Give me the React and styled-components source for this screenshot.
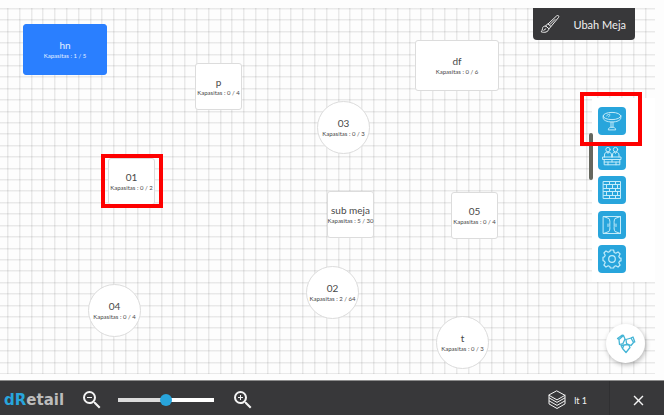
import React from "react";
import styled, { createGlobalStyle, css } from "styled-components";
import { MdZoomIn, MdZoomOut, MdClose } from "react-icons/md";

const GlobalStyle = createGlobalStyle`
  * { box-sizing: border-box; }
  body { margin: 0; background: #fdfdfd; font-family: Lato, "Open Sans", sans-serif; }
  button { font: inherit; border: 0; padding: 0; cursor: pointer; }
`;

const Page = styled.div`
  min-height: 100vh;
  display: grid;
  grid-template-rows: 1fr auto;
`;

const Room = styled.main`
  position: relative;
  padding: 8px 9px 6px 0;
  overflow: hidden;
`;

const Floor = styled.div`
  height: 100%;
  background:
    repeating-linear-gradient(to right, transparent 0 7px, rgba(0, 0, 0, 0.08) 7px 8px, rgba(0, 0, 0, 0.04) 8px 9px, transparent 9px calc(100% / 55 - 1px / 10)),
    repeating-linear-gradient(to bottom, rgba(0, 0, 0, 0.08) 0 1px, rgba(0, 0, 0, 0.04) 1px 2px, transparent 2px calc((100% - 1px) / 32)),
    #fdfdfd;
`;

const shapes = {
  square: css`width: 47px; height: 47px; border-radius: 3px;`,
  wide: css`width: 84px; height: 51px; border-radius: 3px;`,
  round: css`width: 53px; height: 53px; border-radius: 50%;`,
};

const Table = styled.button`
  position: absolute;
  left: ${(p) => p.$x}px;
  top: ${(p) => p.$y}px;
  ${(p) => shapes[p.$shape]}
  display: flex;
  flex-direction: column;
  align-items: center;
  justify-content: center;
  white-space: nowrap;
  color: ${(p) => (p.$busy ? "#e4efff" : "#484848")};
  background: ${(p) => (p.$busy ? "#2a7fff" : "#fff")};
  border: 1px solid ${(p) => (p.$busy ? "#2a7fff" : "#dcdcdc")};
`;

const TableName = styled.span`
  font-size: 10px;
  line-height: 12px;
`;

const Capacity = styled.span`
  font-size: 6px;
  line-height: 10px;
`;

const Marker = styled.div`
  position: absolute;
  ${(p) => (p.$right ? `right: ${p.$right}px;` : `left: ${p.$left}px;`)}
  top: ${(p) => p.$top}px;
  width: 62px;
  height: 54px;
  border: 4px solid #fe0000;
  pointer-events: none;
`;

const EditButton = styled.button`
  position: absolute;
  top: 8px;
  right: 29px;
  width: 102px;
  height: 32px;
  && { padding: 0 9px 0 7px; }
  display: flex;
  align-items: center;
  justify-content: space-between;
  color: #f0f0f0;
  background: #38383a;
  border-radius: 0 0 4px 4px;
  font-size: 11px;
  white-space: nowrap;
`;

const Tools = styled.nav`
  position: absolute;
  top: 98px;
  right: 9px;
  width: 63px;
  height: 184px;
  padding: 9px 6px;
  display: flex;
  flex-direction: column;
  justify-content: space-between;
  background: #fff;
`;

const ToolButton = styled.button`
  width: 28px;
  height: 28px;
  display: grid;
  place-items: center;
  color: #c4ecfa;
  background: #28a5dc;
  border-radius: 4px;
`;

const Handle = styled.div`
  position: absolute;
  top: 133px;
  right: 71px;
  width: 4px;
  height: 47px;
  border-radius: 2px;
  background: #65675f;
`;

const Fab = styled.button`
  position: absolute;
  right: 19px;
  bottom: 17px;
  width: 39px;
  height: 39px;
  display: grid;
  place-items: center;
  color: #45b5d6;
  background: #fff;
  border-radius: 50%;
  box-shadow: 1px 2px 5px rgba(0, 0, 0, 0.28);
`;

const Line = styled.svg`
  display: block;
  width: 20px;
  height: 20px;
  fill: none;
  stroke: currentColor;
  stroke-width: ${(p) => p.$weight || 1};
  stroke-linecap: round;
  stroke-linejoin: round;
`;

const Bar = styled.footer`
  display: flex;
  align-items: stretch;
  height: 35px;
  padding: 4px 0 0 4px;
  color: #f4f4f4;
  background: #38383a;
  border-top: 1px solid #8c8c8c;
`;

const Logo = styled.div`
  align-self: center;
  width: 76px;
  font: bold 15px/20px "DejaVu Sans", sans-serif;
  color: #bcbcbc;
`;

const LogoAccent = styled.span`
  color: #28a5dc;
`;

const BarButton = styled.button`
  display: flex;
  align-items: center;
  justify-content: center;
  gap: 7px;
  color: inherit;
  background: none;
  font-size: 9px;
`;

const Slider = styled.input`
  appearance: none;
  align-self: center;
  width: 96px;
  height: 12px;
  margin: 0 17px 0 14px;
  background: linear-gradient(to right, #dcdcdc 50%, #fff 50%) center / 100% 4px no-repeat;

  &::-webkit-slider-thumb {
    appearance: none;
    width: 12px;
    height: 12px;
    border-radius: 50%;
    background: #28a5dc;
  }
`;

const FloorButton = styled(BarButton)`
  margin-left: auto;
  && { padding-right: 22px; }
`;

const CloseButton = styled(BarButton)`
  width: 55px;
  margin-top: -4px;
  && {
    padding: 4px 0 0 3px;
    border-left: 1px solid #303032;
  }
`;

const tables = [
  { name: "hn", used: 1, seats: 5, x: 23, y: 24, shape: "wide", busy: true },
  { name: "p", used: 0, seats: 4, x: 195, y: 63, shape: "square" },
  { name: "df", used: 0, seats: 6, x: 415, y: 40, shape: "wide" },
  { name: "03", used: 0, seats: 3, x: 317, y: 101, shape: "round" },
  { name: "01", used: 0, seats: 2, x: 108, y: 158, shape: "square" },
  { name: "sub meja", used: 5, seats: 30, x: 327, y: 191, shape: "square" },
  { name: "05", used: 0, seats: 4, x: 451, y: 192, shape: "square" },
  { name: "02", used: 2, seats: 64, x: 306, y: 266, shape: "round" },
  { name: "04", used: 0, seats: 4, x: 88, y: 284, shape: "round" },
  { name: "t", used: 0, seats: 3, x: 436, y: 316, shape: "round" },
];

const TableIcon = () => (
  <Line viewBox="0 0 20 20" aria-hidden="true">
    <ellipse cx="10" cy="5" rx="8.8" ry="3.6" />
    <path d="M1.2 5v2c0 2.200 3.900 4 8.800 4s8.800-1.800 8.800-4V5M4.500 5c.5-1 1.500-1.500 3-1.800M6.500 5.800l1.600-1.500M9 11v5.200M11 11v5.200M6.300 18.500c0-1.500 1.500-2.300 3.700-2.300s3.700.8 3.700 2.300z" />
  </Line>
);

const CounterIcon = () => (
  <Line viewBox="0 0 20 20" aria-hidden="true">
    <circle cx="6" cy="3.600" r="2.200" />
    <circle cx="13.500" cy="3.600" r="2.200" />
    <path d="M2.500 11V9c0-1.700 1-2.700 2.500-3l1 1.500L7 6c1.500.3 2.500 1.300 2.500 3v2M10.500 11V9c0-1.700.8-2.700 2-3l1 1.500 1-1.500c1.500.3 2.500 1.300 2.500 3v2M1 11h18v2.500H1zM2.200 13.500v5.300h15.600v-5.300M2.200 16h15.600M6 16v2.800M10 13.500V16M14 16v2.800" />
  </Line>
);

const WallIcon = () => (
  <Line viewBox="0 0 20 20" aria-hidden="true">
    <path d="M1.500 1.500h17v17h-17zM1.500 4.500h17M1.500 8.500h17M1.500 11.500h17M1.500 15.500h17M7.500 1.500v3M13.500 1.500v3M4.500 4.500v4M10.500 4.500v4M15.500 4.500v4M7.500 8.500v3M13.500 8.500v3M4.500 11.500v4M10.500 11.500v4M15.500 11.500v4M7.500 15.500v3M13.500 15.500v3" />
  </Line>
);

const DoorIcon = () => (
  <Line viewBox="0 0 20 20" aria-hidden="true">
    <path d="M1.500 1.500h17v17h-17zM1.500 1.500 7 3.500c1 2 1 3.500.8 5.500v2.500c.2 2 .2 3-.8 5l-5.500 2M18.500 1.500 13 3.500c-1 2-1 3.500-.8 5.500v2.500c-.2 2-.2 3 .8 5l5.500 2M6 9v2.500M14 9v2.500" />
  </Line>
);

const GearIcon = () => (
  <Line viewBox="0 0 20 20" $weight={1.2} aria-hidden="true">
    <circle cx="10" cy="10" r="3.300" />
    <path d="M8.400 1h3.200l.6 2.500 1.600.7L16 2.900 18.100 5l-1.300 2.200.7 1.600 1.500.4v2.600l-1.500.4-.7 1.600 1.300 2.200-2.100 2.100-2.200-1.300-1.600.7-.6 1.500H8.400l-.6-1.500-1.600-.7L4 18.100 1.900 16l1.300-2.200-.7-1.600L1 11.600V8.400l1.500-.6.7-1.600L1.900 4 4 1.900l2.200 1.300 1.600-.7z" />
  </Line>
);

const tools = [
  { label: "Meja", Icon: TableIcon },
  { label: "Kasir", Icon: CounterIcon },
  { label: "Tembok", Icon: WallIcon },
  { label: "Pintu", Icon: DoorIcon },
  { label: "Pengaturan", Icon: GearIcon },
];

const BrushIcon = () => (
  <Line viewBox="0 0 20 20" aria-hidden="true">
    <path d="M8 10 16.500 2c1.300-1.200 3-.2 2 1.500L11 12.500M8 10l3 2.500-2 2.300-3-2.600zM6 12.200c-2-.6-3.300.5-3.500 2.300-.1 1.500-.6 2.500-1.300 3.300 3 1.200 7.300.5 7.800-3M3.800 16.300l2-1.500M10 10.500l5-5" />
  </Line>
);

const LayersIcon = () => (
  <Line viewBox="0 0 20 20" aria-hidden="true">
    <path d="M10 1 18 5.300v2.500l-8 4.600-8-4.600V5.300zM2 8v2.800l8 4.600 8-4.600V8M2 11v2.900l8 4.600 8-4.600V11M2 5.300l8 4.600 8-4.600" />
  </Line>
);

const MergeIcon = () => (
  <Line viewBox="0 0 20 20" $weight={1.3} aria-hidden="true">
    <path d="M7.500 1.500 9 5 7 9.500 3.500 10.500 3 5.500zM10 5.500l5-1.500 2.500 4.500-2.500 3-4.500-2zM8 11l4.500-.5 1.500 3-4 5-3.500-4zM3 5.500 1.500 4.500 6 1.200l1.500.3M15 4l2-1 1.800 5-1.300.5M6.500 14.500 5 11.500 8 11" />
  </Line>
);

export default function App() {
  return (
    <Page>
      <GlobalStyle />
      <Room>
        <Floor />
        {tables.map((t) => (
          <Table key={t.name} $x={t.x} $y={t.y} $shape={t.shape} $busy={t.busy}>
            <TableName>{t.name}</TableName>
            <Capacity>{`Kapasitas : ${t.used} / ${t.seats}`}</Capacity>
          </Table>
        ))}
        <EditButton>
          <BrushIcon />
          Ubah Meja
        </EditButton>
        <Tools aria-label="Alat">
          {tools.map(({ label, Icon }) => (
            <ToolButton key={label} aria-label={label}>
              <Icon />
            </ToolButton>
          ))}
        </Tools>
        <Handle />
        <Fab aria-label="Gabung meja">
          <MergeIcon />
        </Fab>
        <Marker $left={101} $top={154} />
        <Marker $right={22} $top={92} />
      </Room>
      <Bar>
        <Logo>
          <LogoAccent>dR</LogoAccent>etail
        </Logo>
        <BarButton aria-label="Perkecil">
          <MdZoomOut size={24} />
        </BarButton>
        <Slider type="range" min="0" max="100" defaultValue="50" aria-label="Zoom" />
        <BarButton aria-label="Perbesar">
          <MdZoomIn size={24} />
        </BarButton>
        <FloorButton>
          <LayersIcon />
          lt 1
        </FloorButton>
        <CloseButton aria-label="Tutup">
          <MdClose size={17} />
        </CloseButton>
      </Bar>
    </Page>
  );
}
